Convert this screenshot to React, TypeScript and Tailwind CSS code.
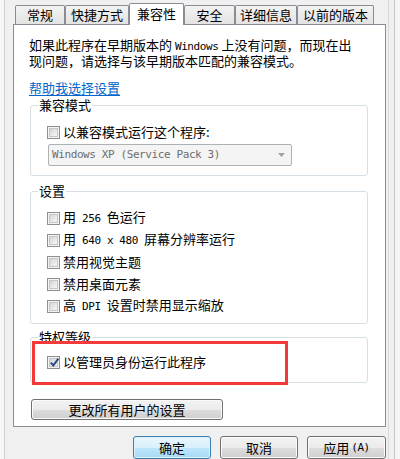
import React from "react";

const mono = "font-['DejaVu_Sans_Mono',monospace] text-[11px] tracking-[-0.4px]";

function Check({ checked }: { checked?: boolean }) {
  return (
    <span className="relative inline-flex h-[13px] w-[13px] shrink-0 items-center justify-center border border-[#8e8f8f] bg-[#f4f4f4]">
      <span className="h-[9px] w-[9px] border border-[#c6c6c6] bg-linear-to-br from-[#d2d4d8] to-[#f7f7f7]" />
      {checked && (
        <svg className="absolute left-[1px] top-[0px]" width="11" height="11" viewBox="0 0 11 11">
          <path d="M1.8 5.6 L4.3 8.4 L9.4 1.6" fill="none" stroke="#2c4a85" strokeWidth="1.9" strokeLinejoin="miter" />
        </svg>
      )}
    </span>
  );
}

function Row({ checked, children }: { checked?: boolean; children: React.ReactNode }) {
  return (
    <div className="flex h-[14px] items-center gap-[3px] pl-[16px] leading-[14px]">
      <Check checked={checked} />
      <span className="whitespace-nowrap">{children}</span>
    </div>
  );
}

function Group({ label, className, children }: { label: string; className: string; children: React.ReactNode }) {
  return (
    <div className={"relative ml-[16px] w-[338px] rounded-[3px] border border-[#d5dfe5] " + className}>
      <span className="absolute left-[7px] top-[-9px] bg-white px-[1px] leading-[16px]">{label}</span>
      {children}
    </div>
  );
}

function Btn({ children, className, focused }: { children: React.ReactNode; className: string; focused?: boolean }) {
  return (
    <div
      className={
        "flex items-center justify-center rounded-[3px] border leading-[14px] " +
        (focused
          ? "border-[#3c7fb1] bg-[linear-gradient(#eaf6fd_0%,#d9f0fc_50%,#bee6fd_51%,#a7d9f5_100%)] shadow-[inset_0_0_0_1px_#dff2fc] "
          : "border-[#707070] bg-[linear-gradient(#f2f2f2_0%,#ebebeb_50%,#dddddd_51%,#cfcfcf_100%)] shadow-[inset_0_0_0_1px_#fbfbfb] ") +
        className
      }
    >
      {children}
    </div>
  );
}

function Tab({ label, w, selected }: { label: string; w: string; selected?: boolean }) {
  return (
    <div
      className={
        "flex items-center justify-center rounded-t-[2px] border border-b-0 border-[#898c95] leading-[14px] " +
        (selected
          ? "relative z-10 -mb-px h-[22px] bg-white pb-[2px] "
          : "h-[19px] bg-linear-to-b from-[#f3f3f3] to-[#e2e2e2] ") +
        w
      }
    >
      {label}
    </div>
  );
}

export default function App() {
  return (
    <div className="flex h-[459px] w-[400px] overflow-hidden bg-[#f0f0f0] font-['Noto_Sans_CJK_SC','Noto_Sans',sans-serif] text-[13px] text-black">
      <div className="w-[5px] shrink-0 border-r border-[#cfcfcf] bg-[#f7f7f7]" />
      <div className="flex w-[383px] shrink-0 flex-col">
        <div className="ml-[10px] mt-[3px] flex h-[21px] items-end">
          <Tab label="常规" w="w-[50px]" />
          <Tab label="快捷方式" w="w-[64px]" />
          <Tab label="兼容性" w="w-[55px]" selected />
          <Tab label="安全" w="w-[51px]" />
          <Tab label="详细信息" w="w-[62px]" />
          <Tab label="以前的版本" w="w-[77px]" />
        </div>
        <div className="ml-[8px] flex h-[410px] w-[373px] flex-col border border-[#898c95] bg-white">
          <p className="ml-[15px] mt-[13px] whitespace-nowrap leading-[14px]">
            如果此程序在早期版本的 <span className={mono}>Windows</span> 上没有问题，而现在出
            <br />
            现问题，请选择与该早期版本匹配的兼容模式。
          </p>
          <div className="ml-[15px] mt-[13px] leading-[14px]">
            <span className="text-[#0066cc] underline decoration-[#0066cc] underline-offset-[2px]">帮助我选择设置</span>
          </div>
          <Group label="兼容模式" className="mt-[10px] h-[71px] pt-[19px]">
            <Row>以兼容模式运行这个程序:</Row>
            <div className="ml-[17px] mt-[5px] flex h-[22px] w-[244px] items-center justify-between rounded-[2px] border border-[#adb2b5] bg-[#f4f4f4] pl-[3px] pr-[5px]">
              <span className={mono + " text-[#6d6d6d]"}>Windows XP (Service Pack 3)</span>
              <svg width="8" height="5" viewBox="0 0 8 5">
                <path d="M0 0 H7 L3.5 4 Z" fill="#a0a0a0" />
              </svg>
            </div>
          </Group>
          <Group label="设置" className="mt-[15px] flex h-[133px] flex-col gap-[8px] pt-[19px]">
            <Row>
              用<span className={mono + " mx-[6px]"}>256</span>色运行
            </Row>
            <Row>
              用<span className={mono + " mx-[6px]"}>640 x 480</span>屏幕分辨率运行
            </Row>
            <Row>禁用视觉主题</Row>
            <Row>禁用桌面元素</Row>
            <Row>
              高<span className={mono + " mx-[6px]"}>DPI</span>设置时禁用显示缩放
            </Row>
          </Group>
          <Group label="特权等级" className="mt-[13px] h-[46px] pt-[17px]">
            <Row checked>以管理员身份运行此程序</Row>
            <div className="absolute left-[1px] top-[3px] h-[44px] w-[256px] border-[3px] border-[#f23a3a]" />
          </Group>
          <Btn className="ml-[17px] mt-[16px] h-[21px] w-[192px]">更改所有用户的设置</Btn>
        </div>
        <div className="mt-[9px] flex justify-end gap-[9px] pr-[2px]">
          <Btn focused className="h-[23px] w-[78px]">确定</Btn>
          <Btn className="h-[23px] w-[78px]">取消</Btn>
          <Btn className="h-[23px] w-[79px]">
            应用<span className={mono + " ml-[2px]"}>(A)</span>
          </Btn>
        </div>
      </div>
      <div className="flex-1 border-l border-[#d9d9d9] bg-[#f0f0f0]">
        <div className="ml-[5px] h-full border-l border-[#c4c4c4] bg-[#f5f5f5]" />
      </div>
    </div>
  );
}
